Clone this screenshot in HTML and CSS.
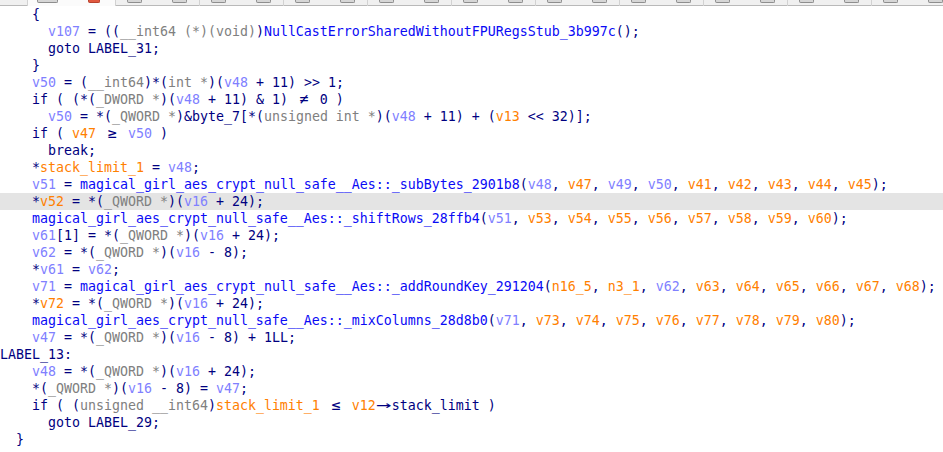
FILE: index.html
```html
<!DOCTYPE html>
<html>
<head>
<meta charset="utf-8">
<link rel="stylesheet" href="styles.css">
</head>
<body>
<div class="toolbar">
  <div class="tb-lead"></div>
  <div class="tb-tab active"><span class="stub wide"></span><span class="stub red"></span></div>
  <div class="tb-tab"><span class="stub"></span><span class="stub"></span></div>
  <div class="tb-tab"><span class="stub"></span><span class="stub"></span></div>
  <div class="tb-tab"><span class="stub"></span><span class="stub"></span></div>
  <div class="tb-tab"><span class="stub"></span><span class="stub"></span></div>
  <div class="tb-tab"><span class="stub"></span><span class="stub"></span></div>
  <div class="tb-tab"><span class="stub"></span><span class="stub"></span></div>
  <div class="tb-tab"><span class="stub"></span><span class="stub"></span></div>
  <div class="tb-tab"><span class="stub"></span><span class="stub"></span></div>
  <div class="tb-tab"><span class="stub"></span><span class="stub"></span></div>
  <div class="tb-tab"><span class="stub"></span><span class="stub"></span></div>
</div>
<div class="code">
<div class="line">    {</div>
<div class="line">      <span class="l">v107</span> = ((<span class="t">__int64 (*)(void)</span>)<span class="f">NullCastErrorSharedWithoutFPURegsStub_3b997c</span>();</div>
<div class="line">      goto LABEL_31;</div>
<div class="line">    }</div>
<div class="line">    <span class="l">v50</span> = (<span class="t">__int64</span>)*(<span class="t">int *</span>)(<span class="l">v48</span> + 11) &gt;&gt; 1;</div>
<div class="line">    if ( (*(<span class="t">_DWORD *</span>)(<span class="l">v48</span> + 11) &amp; 1) <span class="lig">≠</span> 0 )</div>
<div class="line">      <span class="l">v50</span> = *(<span class="t">_QWORD *</span>)&amp;byte_7[*(<span class="t">unsigned int *</span>)(<span class="l">v48</span> + 11) + (<span class="o">v13</span> &lt;&lt; 32)];</div>
<div class="line">    if ( <span class="o">v47</span> <span class="lig">≥</span> <span class="l">v50</span> )</div>
<div class="line">      break;</div>
<div class="line">    *<span class="o">stack_limit_1</span> = <span class="l">v48</span>;</div>
<div class="line">    <span class="l">v51</span> = <span class="f">magical_girl_aes_crypt_null_safe__Aes::_subBytes_2901b8</span>(<span class="l">v48</span>, <span class="o">v47</span>, <span class="l">v49</span>, <span class="l">v50</span>, <span class="o">v41</span>, <span class="o">v42</span>, <span class="o">v43</span>, <span class="o">v44</span>, <span class="o">v45</span>);</div>
<div class="line current">    *<span class="o">v52</span> = *(<span class="t">_QWORD *</span>)(<span class="l">v16</span> + 24);</div>
<div class="line">    <span class="f">magical_girl_aes_crypt_null_safe__Aes::_shiftRows_28ffb4</span>(<span class="l">v51</span>, <span class="o">v53</span>, <span class="o">v54</span>, <span class="o">v55</span>, <span class="o">v56</span>, <span class="o">v57</span>, <span class="o">v58</span>, <span class="o">v59</span>, <span class="o">v60</span>);</div>
<div class="line">    <span class="l">v61</span>[1] = *(<span class="t">_QWORD *</span>)(<span class="l">v16</span> + 24);</div>
<div class="line">    <span class="l">v62</span> = *(<span class="t">_QWORD *</span>)(<span class="l">v16</span> - 8);</div>
<div class="line">    *<span class="l">v61</span> = <span class="l">v62</span>;</div>
<div class="line">    <span class="l">v71</span> = <span class="f">magical_girl_aes_crypt_null_safe__Aes::_addRoundKey_291204</span>(<span class="o">n16_5</span>, <span class="o">n3_1</span>, <span class="l">v62</span>, <span class="o">v63</span>, <span class="o">v64</span>, <span class="o">v65</span>, <span class="o">v66</span>, <span class="o">v67</span>, <span class="o">v68</span>);</div>
<div class="line">    *<span class="o">v72</span> = *(<span class="t">_QWORD *</span>)(<span class="l">v16</span> + 24);</div>
<div class="line">    <span class="f">magical_girl_aes_crypt_null_safe__Aes::_mixColumns_28d8b0</span>(<span class="l">v71</span>, <span class="o">v73</span>, <span class="o">v74</span>, <span class="o">v75</span>, <span class="o">v76</span>, <span class="o">v77</span>, <span class="o">v78</span>, <span class="o">v79</span>, <span class="o">v80</span>);</div>
<div class="line">    <span class="l">v47</span> = *(<span class="t">_QWORD *</span>)(<span class="l">v16</span> - 8) + 1LL;</div>
<div class="line">LABEL_13:</div>
<div class="line">    <span class="l">v48</span> = *(<span class="t">_QWORD *</span>)(<span class="l">v16</span> + 24);</div>
<div class="line">    *(<span class="t">_QWORD *</span>)(<span class="l">v16</span> - 8) = <span class="l">v47</span>;</div>
<div class="line">    if ( (<span class="t">unsigned __int64</span>)<span class="o">stack_limit_1</span> <span class="lig">≤</span> <span class="o">v12</span><span class="lig arrow"><span class="stretch">→</span></span>stack_limit )</div>
<div class="line">      goto LABEL_29;</div>
<div class="line">  }</div>
</div>
</body>
</html>
```
FILE: styles.css
```css
html, body {
  margin: 0;
  padding: 0;
  background: #ffffff;
}

.toolbar {
  display: flex;
  height: 6px;
  background: #f0f0f0;
  box-shadow: inset 0 -1px 0 #b9b9b9;
  overflow: hidden;
}

.tb-lead {
  width: 27px;
  flex: none;
}

.tb-tab {
  flex: none;
  width: 84px;
  border-left: 1px solid #d2d2d2;
  display: flex;
  gap: 30px;
  padding-left: 11px;
  box-sizing: border-box;
}

.tb-tab.active {
  width: 88px;
  background: #fbfbfb;
  padding-left: 9px;
}

.stub {
  display: block;
  width: 15px;
  height: 3px;
  background: #d6d6d6;
  border: 1px solid #8e8e8e;
  border-top: none;
  border-radius: 0 0 2px 2px;
  box-sizing: border-box;
}

.stub.wide {
  width: 21px;
}

.stub.red {
  width: 12px;
  background: #e0583f;
  border-color: #b8412d;
}

.code {
  font-family: "DejaVu Sans Mono", "Liberation Mono", monospace;
  font-size: 13.29px;
  line-height: 17px;
  color: #000080;
}

.line {
  height: 17px;
  white-space: pre;
}

.line.current {
  background: #e4e4e4;
}

.l { color: #8080ff; }
.o { color: #ff8000; }
.f { color: #0a0af5; }
.t { color: #808080; }

.lig {
  display: inline-block;
  width: 16px;
  text-align: center;
  font-size: 15px;
  line-height: 17px;
}

.stretch {
  display: inline-block;
  transform: scaleX(1.7);
}
```
